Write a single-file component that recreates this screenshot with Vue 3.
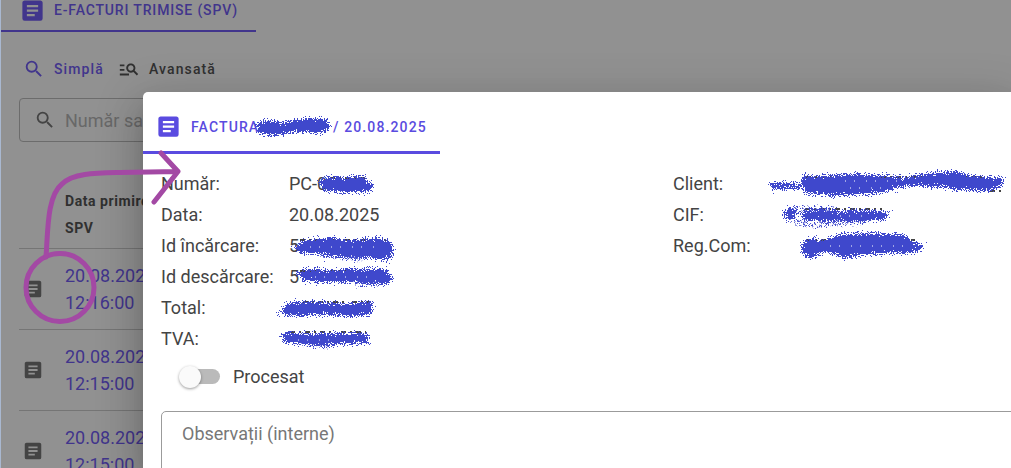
<script setup>
import { ref } from 'vue'

const search = ref('')
const notes = ref('')
const processed = ref(false)

const textBox =
  'M14,17H7V15H14M17,13H7V11H17M17,9H7V7H17M19,3H5C3.89,3 3,3.89 3,5V19A2,2 0 0,0 5,21H19A2,2 0 0,0 21,19V5C21,3.89 20.1,3 19,3Z'
const magnify =
  'M9.5,3A6.5,6.5 0 0,1 16,9.5C16,11.11 15.41,12.59 14.44,13.73L14.71,14H15.5L20.5,19L19,20.5L14,15.5V14.71L13.73,14.44C12.59,15.41 11.11,16 9.5,16A6.5,6.5 0 0,1 3,9.5A6.5,6.5 0 0,1 9.5,3M9.5,5C7,5 5,7 5,9.5C5,12 7,14 9.5,14C12,14 14,12 14,9.5C14,7 12,5 9.5,5Z'
const advanced =
  'M7 9H2V7h5v2zm0 3H2v2h5v-2zm13.59 7l-3.83-3.83c-.8.52-1.74.83-2.76.83-2.76 0-5-2.24-5-5s2.24-5 5-5 5 2.24 5 5c0 1.02-.31 1.96-.83 2.75L22 17.59 20.59 19zM17 11c0-1.65-1.35-3-3-3s-3 1.35-3 3 1.35 3 3 3 3-1.35 3-3zM2 19h10v-2H2v2z'

const rows = [
  { date: '20.08.2025', time: '12:16:00' },
  { date: '20.08.2025', time: '12:15:00' },
  { date: '20.08.2025', time: '12:15:00' },
]

const invoice = [
  { label: 'Număr:', value: 'PC-0' },
  { label: 'Data:', value: '20.08.2025' },
  { label: 'Id încărcare:', value: '5' },
  { label: 'Id descărcare:', value: '5' },
  { label: 'Total:', value: '' },
  { label: 'TVA:', value: '' },
]
const client = [
  { label: 'Client:', value: '' },
  { label: 'CIF:', value: '' },
  { label: 'Reg.Com:', value: '' },
]
</script>

<template>
  <div class="screen">
    <main class="page">
      <nav class="tabs">
        <a class="tab" href="#facturi">
          <svg class="icon-lg" viewBox="0 0 24 24"><path :d="textBox" /></svg>
          <span>E-FACTURI TRIMISE (SPV)</span>
        </a>
      </nav>

      <div class="modes">
        <button class="mode active" type="button">
          <svg class="icon" viewBox="0 0 24 24"><path :d="magnify" /></svg>
          <span>Simplă</span>
        </button>
        <button class="mode" type="button">
          <svg class="icon" viewBox="0 0 24 24"><path :d="advanced" /></svg>
          <span>Avansată</span>
        </button>
      </div>

      <label class="search">
        <svg class="icon" viewBox="0 0 24 24"><path :d="magnify" /></svg>
        <input v-model="search" type="text" placeholder="Număr sau client" aria-label="Număr sau client" />
      </label>

      <table class="list">
        <thead>
          <tr>
            <th class="act"></th>
            <th>Data primire<br />SPV</th>
          </tr>
        </thead>
        <tbody>
          <tr v-for="(row, i) in rows" :key="i">
            <td class="act">
              <button class="open" type="button" aria-label="Deschide factura">
                <svg class="icon" viewBox="0 0 24 24"><path :d="textBox" /></svg>
              </button>
            </td>
            <td><a href="#factura">{{ row.date }}<br />{{ row.time }}</a></td>
          </tr>
        </tbody>
      </table>
    </main>

    <section class="dialog" role="dialog" aria-label="Factura">
      <nav class="dialog-tabs">
        <a class="dialog-tab" href="#factura">
          <svg class="icon-lg" viewBox="0 0 24 24"><path :d="textBox" /></svg>
          <span class="tab-name">FACTURA</span>
          <span>/ 20.08.2025</span>
        </a>
      </nav>

      <div class="details">
        <dl class="facts">
          <template v-for="f in invoice" :key="f.label">
            <dt>{{ f.label }}</dt>
            <dd>{{ f.value }}</dd>
          </template>
        </dl>
        <dl class="facts">
          <template v-for="f in client" :key="f.label">
            <dt>{{ f.label }}</dt>
            <dd>{{ f.value }}</dd>
          </template>
        </dl>
      </div>

      <label class="switch">
        <input v-model="processed" type="checkbox" />
        <span>Procesat</span>
      </label>

      <textarea v-model="notes" class="notes" placeholder="Observații (interne)" aria-label="Observații (interne)"></textarea>
    </section>

    <svg class="ink" width="1011" height="468" viewBox="0 0 1011 468" aria-hidden="true">
      <defs>
        <filter id="spray" filterUnits="userSpaceOnUse" x="0" y="0" width="1011" height="468" color-interpolation-filters="sRGB">
          <feTurbulence type="fractalNoise" baseFrequency="0.9" numOctaves="2" seed="4" result="n" />
          <feDisplacementMap in="SourceGraphic" in2="n" scale="14" xChannelSelector="R" yChannelSelector="G" />
        </filter>
      </defs>
      <g class="hidden-text">
        <path d="M330 178H366M300 240H388M300 271H350M303 302H345M352 302H370M290 332H334M341 332H366" />
        <path d="M806 177H985M990 191H1001M805 209H882M806 240H915" />
      </g>
      <g class="spray" filter="url(#spray)">
        <path d="M257 125L266 121L282 123L296 121L314 119L325 120L329 125L327 130L315 132L297 130L282 134L270 135L259 132Z" />
        <path d="M320 181L328 178L345 179L360 177L368 182L373 187L367 191L345 191L325 190Z" />
        <path d="M296 248L303 241L330 239L355 241L378 239L391 242L392 253L387 259L368 257L348 257L322 253L300 252Z" />
        <path d="M297 274L305 270L335 271L360 270L385 270L392 277L386 284L365 282L355 281L330 281L305 280Z" />
        <path d="M280 312L290 303L320 303L345 305L371 302L371 314L350 315L325 314L290 315Z" />
        <path d="M282 335L288 333L310 335L335 334L362 334L369 338L366 342L342 343L320 345L300 343L285 341Z" />
        <path d="M802 176L812 178L845 175L875 176L905 179L928 174L955 172L972 177L1000 179L1003 184L990 190L960 189L940 186L907 185L880 192L835 195L805 192Z" />
        <path d="M770 184L800 184L800 188L772 188Z" />
        <path d="M784 213L789 208L795 211L794 217L788 219ZM801 213L820 211L835 212L860 211L880 212L888 214L885 218L862 220L835 220L805 219Z" />
        <path d="M802 245L810 240L825 241L843 235L870 234L905 236L911 242L923 246L916 251L895 252L870 253L845 257L825 250L811 258L804 253Z" />
      </g>
      <g class="flecks" filter="url(#spray)">
        <path d="M790 217C797 225 815 226 832 224C846 221 858 223 868 220" />
        <path d="M795 209H835M355 284L378 284M303 343L328 346M322 255L362 259" />
      </g>
      <g class="specks">
        <path d="M310 247H382M315 277H378M298 340H334M845 181H900M830 246H905M840 216H865M850 188H885" />
      </g>
      <g class="pen">
        <circle cx="60" cy="287.5" r="34" />
        <path d="M46 257C48 230 47 196 62 184C73 173 96 173 120 172.500L178 171.500M161 153L178 171.500L154 202" />
      </g>
    </svg>
  </div>
</template>

<style>
body {
  margin: 0;
  overflow: hidden;
}
</style>

<style scoped>
.screen {
  position: relative;
  height: 100vh;
  overflow: hidden;
  box-sizing: border-box;
  border-left: 1px solid #a9b8d0;
  background: #919191;
  color: #303030;
  font-family: Roboto, 'Noto Sans', sans-serif;
  font-size: 18px;
}

svg {
  fill: currentColor;
  flex: none;
}

.icon {
  width: 22px;
  height: 22px;
}

.icon-lg {
  width: 27px;
  height: 27px;
}

a {
  color: inherit;
  text-decoration: none;
}

button {
  padding: 0;
  border: 0;
  background: none;
  color: inherit;
  font: inherit;
}

.tabs,
.dialog-tabs {
  display: flex;
}

.tab {
  display: flex;
  align-items: center;
  gap: 8px;
  height: 32px;
  padding: 0 18px 10px;
  box-sizing: border-box;
  border-bottom: 2px solid #41358c;
  color: #41358c;
  font-size: 14px;
  font-weight: 500;
  letter-spacing: 0.06em;
}

.modes {
  display: flex;
  gap: 14px;
  padding: 26px 22px 0;
}

.mode {
  display: flex;
  align-items: center;
  gap: 9px;
  height: 22px;
  font-size: 14px;
  font-weight: 500;
  letter-spacing: 0.08em;
}

.mode.active {
  color: #41358c;
}

.search {
  display: flex;
  align-items: center;
  gap: 9px;
  height: 44px;
  margin: 18px 18px 0;
  padding: 0 14px;
  box-sizing: border-box;
  border: 1px solid #6c6c6c;
  border-radius: 4px;
  color: #444;
}

.search input {
  flex: 1;
  min-width: 0;
  padding: 0;
  border: 0;
  outline: 0;
  background: none;
  color: inherit;
  font: inherit;
}

.search input::placeholder {
  color: #686868;
  opacity: 1;
}

.list {
  width: calc(100% - 18px);
  margin: 39px 0 0 18px;
  border-collapse: collapse;
  line-height: 27px;
}

.list th,
.list td {
  height: 80px;
  padding: 0;
  border-bottom: 1px solid #757575;
  text-align: left;
  vertical-align: middle;
}

.list th {
  height: 67px;
  font-size: 14px;
  font-weight: 700;
  letter-spacing: 0.04em;
}

.list td {
  color: #41358c;
}

.list .act {
  width: 46px;
  color: #444;
}

.open {
  display: block;
  margin-left: 3px;
}

.open svg {
  display: block;
}

.dialog {
  position: absolute;
  top: 92px;
  right: 0;
  bottom: 0;
  left: 142px;
  border-top-left-radius: 5px;
  background: #fff;
  color: #444;
  box-shadow:
    0 11px 15px -7px rgba(0, 0, 0, 0.2),
    0 24px 38px 3px rgba(0, 0, 0, 0.14),
    0 9px 46px 8px rgba(0, 0, 0, 0.12);
}

.dialog-tab {
  display: flex;
  align-items: center;
  gap: 9px;
  min-width: 297px;
  height: 62px;
  padding: 10px 12px 0;
  box-sizing: border-box;
  border-bottom: 3px solid #5a4be0;
  color: #5a4be0;
  font-size: 14px;
  font-weight: 500;
  letter-spacing: 0.08em;
}

.tab-name {
  width: 133px;
}

.details {
  display: grid;
  grid-template-columns: 512px 1fr;
  padding: 14px 0 0 18px;
}

.facts {
  display: grid;
  grid-template-columns: 128px 1fr;
  align-content: start;
  grid-auto-rows: 31px;
  margin: 0;
  line-height: 31px;
}

.facts dt,
.facts dd {
  margin: 0;
  white-space: nowrap;
}

.switch {
  display: flex;
  align-items: center;
  gap: 13px;
  height: 24px;
  margin: 10px 0 0 38px;
}

.switch input {
  position: relative;
  width: 38px;
  height: 15px;
  margin: 0 0 0 1px;
  border-radius: 8px;
  appearance: none;
  background: #bababa;
}

.switch input::before {
  content: '';
  position: absolute;
  top: -3px;
  left: -3px;
  width: 22px;
  height: 22px;
  border-radius: 50%;
  background: #fafafa;
  box-shadow: 0 1px 3px rgba(0, 0, 0, 0.4);
}

.switch input:checked::before {
  left: 19px;
}

.notes {
  display: block;
  width: calc(100% + 4px);
  height: 120px;
  margin: 23px 0 0 18px;
  padding: 10px 20px;
  box-sizing: border-box;
  border: 1px solid #9b9b9b;
  border-radius: 5px;
  outline: 0;
  resize: none;
  background: none;
  color: #444;
  font: inherit;
  line-height: 24px;
}

.notes::placeholder {
  color: #777;
  opacity: 1;
}

.ink {
  position: absolute;
  top: 0;
  left: -1px;
  pointer-events: none;
}

.hidden-text {
  fill: none;
  stroke: #444;
  stroke-width: 2;
  stroke-dasharray: 5 4 2 4;
}

.spray {
  fill: #3f48cc;
  stroke: #3f48cc;
  stroke-width: 2;
  shape-rendering: crispEdges;
}

.flecks {
  fill: none;
  stroke: #3f48cc;
  stroke-width: 3;
  stroke-dasharray: 3 2 2 1;
}

.specks {
  fill: none;
  stroke: #fff;
  stroke-width: 1;
  stroke-dasharray: 1 8 1 11;
}

.pen {
  fill: none;
  stroke: #a349a4;
  stroke-width: 5;
  stroke-linecap: round;
  stroke-linejoin: round;
}
</style>
